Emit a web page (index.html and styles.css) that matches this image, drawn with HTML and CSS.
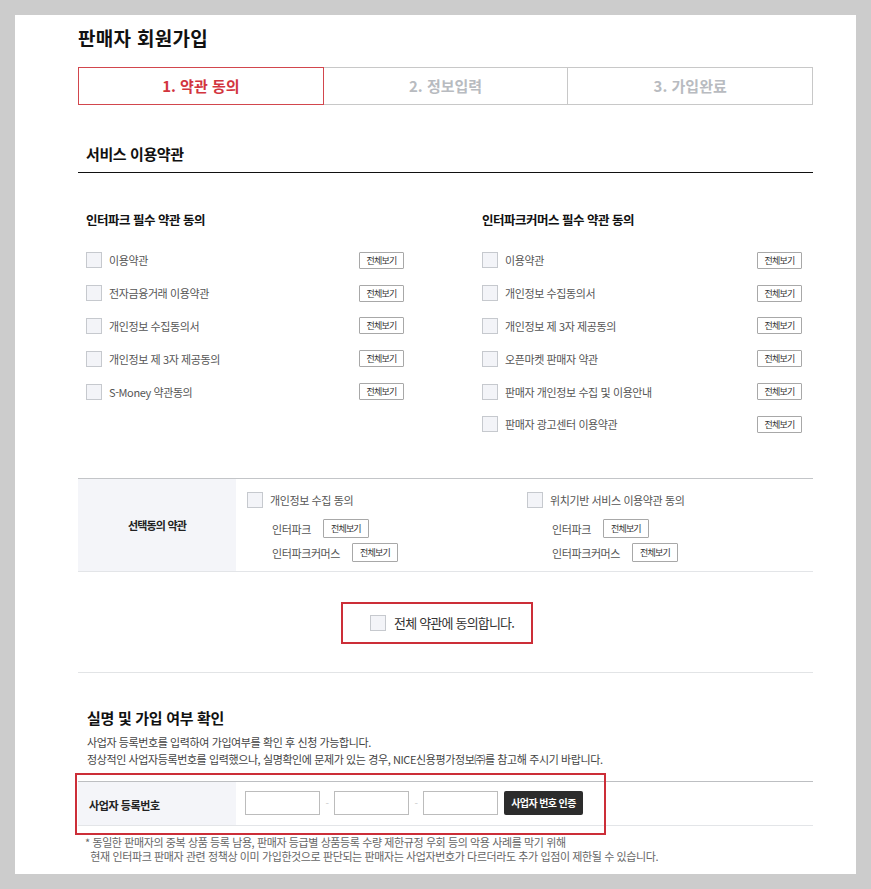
FILE: index.html
```html
<!DOCTYPE html>
<html lang="ko">
<head>
  <meta charset="UTF-8" />
  <title>판매자 회원가입</title>
  <link rel="stylesheet" href="styles.css">
</head>
<body>
  <div class="panel">
    <div class="container">
      <h1 class="page-title">판매자 회원가입</h1>

      <div class="steps">
        <div class="step active">1. 약관 동의</div>
        <div class="step">2. 정보입력</div>
        <div class="step">3. 가입완료</div>
      </div>

      <h2 class="section-title">서비스 이용약관</h2>

      <div class="terms-grid">
        <div class="terms-col">
          <h3>인터파크 필수 약관 동의</h3>
          <div class="term-row"><span class="check"></span><span class="term-label">이용약관</span><button class="view-btn">전체보기</button></div>
          <div class="term-row"><span class="check"></span><span class="term-label">전자금융거래 이용약관</span><button class="view-btn">전체보기</button></div>
          <div class="term-row"><span class="check"></span><span class="term-label">개인정보 수집동의서</span><button class="view-btn">전체보기</button></div>
          <div class="term-row"><span class="check"></span><span class="term-label">개인정보 제 3자 제공동의</span><button class="view-btn">전체보기</button></div>
          <div class="term-row"><span class="check"></span><span class="term-label">S-Money 약관동의</span><button class="view-btn">전체보기</button></div>
        </div>
        <div class="terms-col">
          <h3>인터파크커머스 필수 약관 동의</h3>
          <div class="term-row"><span class="check"></span><span class="term-label">이용약관</span><button class="view-btn">전체보기</button></div>
          <div class="term-row"><span class="check"></span><span class="term-label">개인정보 수집동의서</span><button class="view-btn">전체보기</button></div>
          <div class="term-row"><span class="check"></span><span class="term-label">개인정보 제 3자 제공동의</span><button class="view-btn">전체보기</button></div>
          <div class="term-row"><span class="check"></span><span class="term-label">오픈마켓 판매자 약관</span><button class="view-btn">전체보기</button></div>
          <div class="term-row"><span class="check"></span><span class="term-label">판매자 개인정보 수집 및 이용안내</span><button class="view-btn">전체보기</button></div>
          <div class="term-row"><span class="check"></span><span class="term-label">판매자 광고센터 이용약관</span><button class="view-btn">전체보기</button></div>
        </div>
      </div>

      <div class="optional">
        <div class="optional-head">선택동의 약관</div>
        <div class="optional-body">
          <div class="optional-col">
            <div class="opt-row"><span class="check"></span><span class="opt-label">개인정보 수집 동의</span></div>
            <div class="opt-sub"><span>인터파크</span><button class="view-btn">전체보기</button></div>
            <div class="opt-sub"><span>인터파크커머스</span><button class="view-btn">전체보기</button></div>
          </div>
          <div class="optional-col">
            <div class="opt-row"><span class="check"></span><span class="opt-label">위치기반 서비스 이용약관 동의</span></div>
            <div class="opt-sub"><span>인터파크</span><button class="view-btn">전체보기</button></div>
            <div class="opt-sub"><span>인터파크커머스</span><button class="view-btn">전체보기</button></div>
          </div>
        </div>
      </div>

      <div class="agree-all">
        <label class="agree-box"><span class="check"></span><span>전체 약관에 동의합니다.</span></label>
      </div>

      <div class="verify">
        <h2 class="verify-title">실명 및 가입 여부 확인</h2>
        <p class="desc">사업자 등록번호를 입력하여 가입여부를 확인 후 신청 가능합니다.<br>정상적인 사업자등록번호를 입력했으나, 실명확인에 문제가 있는 경우, NICE신용평가정보㈜를 참고해 주시기 바랍니다.</p>

        <div class="biz-table">
          <div class="biz-head">사업자 등록번호</div>
          <div class="biz-body">
            <input type="text" class="biz-input">
            <span class="dash">-</span>
            <input type="text" class="biz-input">
            <span class="dash">-</span>
            <input type="text" class="biz-input">
            <button class="biz-btn">사업자 번호 인증</button>
          </div>
          <div class="highlight"></div>
        </div>

        <p class="note">* 동일한 판매자의 중복 상품 등록 남용, 판매자 등급별 상품등록 수량 제한규정 우회 등의 악용 사례를 막기 위해<br>&nbsp;&nbsp;현재 인터파크 판매자 관련 정책상 이미 가입한것으로 판단되는 판매자는 사업자번호가 다르더라도 추가 입점이 제한될 수 있습니다.</p>
      </div>
    </div>
  </div>
</body>
</html>
```

FILE: styles.css
```css
* {
  box-sizing: border-box;
}

body {
  margin: 0;
  background-color: #cccccc;
  font-family: 'Noto Sans CJK KR', 'Noto Sans', sans-serif;
  color: #333;
  letter-spacing: -0.4px;
}

.panel {
  background: #fff;
  margin: 15px;
  height: 859px;
  overflow: hidden;
}

.container {
  margin-left: 63px;
  width: 735px;
  padding-top: 10px;
}

.page-title {
  margin: 0;
  font-size: 19px;
  line-height: 26px;
  letter-spacing: 0.3px;
  color: #111;
}

/* steps */
.steps {
  display: flex;
  margin-top: 16px;
}

.step {
  flex: 1;
  height: 38px;
  line-height: 36px;
  text-align: center;
  border: 1px solid #c8c8c8;
  border-left: none;
  font-size: 15px;
  font-weight: bold;
  letter-spacing: 0;
  color: #b8bbc0;
}

.step.active {
  border: 1px solid #d2464d;
  color: #d2353e;
}

.section-title {
  margin: 39px 0 0;
  padding: 0 0 8px 8px;
  font-size: 15px;
  line-height: 20px;
  letter-spacing: -0.4px;
  color: #111;
  border-bottom: 1px solid #111;
}

/* required terms */
.terms-grid {
  display: grid;
  grid-template-columns: 318px 320px;
  column-gap: 78px;
  padding-left: 8px;
  margin-top: 37px;
}

.terms-col h3 {
  margin: 0 0 15px;
  font-size: 12.5px;
  line-height: 19px;
  letter-spacing: -0.5px;
  color: #111;
}

.term-row {
  display: flex;
  align-items: center;
  height: 32.8px;
}

.check {
  display: inline-block;
  flex: none;
  width: 16px;
  height: 16px;
  border: 1px solid #c6c9ce;
  background: #f3f4f8;
}

.term-label {
  margin-left: 7px;
  font-size: 11px;
  letter-spacing: -0.4px;
  color: #555;
}

.view-btn {
  margin-left: auto;
  width: 45px;
  height: 17px;
  padding: 0;
  border: 1px solid #a8a8a8;
  border-radius: 1px;
  background: #fff;
  font-family: inherit;
  font-size: 9px;
  letter-spacing: -0.8px;
  line-height: 15px;
  color: #333;
}

/* optional terms */
.optional {
  display: flex;
  margin-top: 37px;
  border-top: 1px solid #c3c5c8;
  border-bottom: 1px solid #e3e5e8;
}

.optional-head {
  width: 158px;
  background: #f4f5f9;
  display: flex;
  align-items: center;
  justify-content: center;
  font-size: 11px;
  font-weight: bold;
  letter-spacing: -0.8px;
  color: #222;
}

.optional-body {
  flex: 1;
  display: grid;
  grid-template-columns: 280px 1fr;
  padding: 10px 0 6px 11px;
}

.opt-row {
  display: flex;
  align-items: center;
  height: 22px;
  margin-bottom: 6px;
}

.opt-label {
  margin-left: 7px;
  font-size: 11px;
  color: #555;
}

.opt-sub {
  display: flex;
  align-items: center;
  height: 24px;
  padding-left: 25px;
  font-size: 11px;
  color: #555;
}

.opt-sub .view-btn {
  margin-left: 12px;
  width: 46px;
  height: 19px;
  line-height: 17px;
}

/* agree all */
.agree-all {
  display: flex;
  justify-content: center;
  padding: 30px 0 28px;
  border-bottom: 1px solid #e2e4e6;
}

.agree-box {
  display: flex;
  align-items: center;
  gap: 8px;
  height: 42px;
  width: 192px;
  margin-left: -17px;
  padding-left: 27px;
  border: 2px solid #cc2e38;
  font-size: 13px;
  letter-spacing: -0.8px;
  color: #333;
}

/* business number */
.verify-title {
  margin: 35px 0 0;
  padding-left: 9px;
  font-size: 15px;
  line-height: 20px;
  letter-spacing: -0.3px;
  color: #111;
}

.desc {
  margin: 6px 0 0;
  padding-left: 9px;
  font-size: 11px;
  line-height: 17px;
  color: #444;
}

.biz-table {
  position: relative;
  display: flex;
  margin-top: 13px;
  border-top: 1px solid #bdbfc2;
  border-bottom: 1px solid #e3e5e8;
}

.biz-head {
  width: 158px;
  height: 43px;
  padding: 15px 0 0 11px;
  background: #f4f5f9;
  font-size: 11px;
  font-weight: bold;
  line-height: 17px;
  color: #222;
}

.biz-body {
  display: flex;
  align-items: flex-start;
  padding: 9px 0 0 9px;
}

.biz-input {
  width: 75px;
  height: 24px;
  margin: 0;
  border: 1px solid #bcbcbc;
}

.dash {
  width: 14px;
  text-align: center;
  font-size: 10px;
  line-height: 24px;
  color: #ccc;
}

.biz-btn {
  margin-left: 6px;
  width: 79px;
  height: 24px;
  padding: 0;
  border: none;
  border-radius: 2px;
  background: #2c2c2c;
  color: #fff;
  font-family: inherit;
  font-size: 10px;
  font-weight: bold;
  letter-spacing: -0.6px;
}

.highlight {
  position: absolute;
  top: -9px;
  left: -3px;
  width: 531px;
  height: 62px;
  border: 2px solid #cc2e38;
  pointer-events: none;
}

.note {
  margin: 9px 0 0;
  padding-left: 7px;
  font-size: 11px;
  line-height: 14.5px;
  color: #666;
}
```
